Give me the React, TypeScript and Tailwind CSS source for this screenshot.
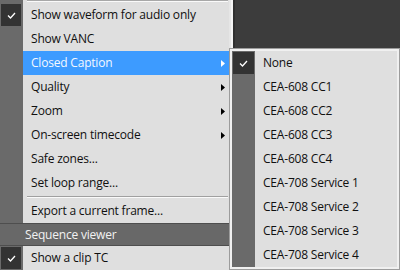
import React from "react";

const font = { fontFamily: '"Open Sans", "Noto Sans", sans-serif' };

function Check() {
  return (
    <svg width="9" height="7" viewBox="0 0 9 7" className="block">
      <polyline points="1,3.5 3.5,6 8,1" fill="none" stroke="#ffffff" strokeWidth="1.3" />
    </svg>
  );
}

function Arrow({ white }: { white?: boolean }) {
  return (
    <svg width="4" height="7" viewBox="0 0 4 7" className="block">
      <polygon points="0,0 4,3.5 0,7" fill={white ? "#ffffff" : "#000000"} />
    </svg>
  );
}

type Item = { label: string; checked?: boolean; sub?: boolean; active?: boolean };

function MainRow({ item }: { item: Item }) {
  return (
    <div className="flex h-[24px]">
      <div className="w-[23px] shrink-0 bg-[#6a6a6a] flex items-center">
        {item.checked && (
          <div className="ml-[1px] w-[20px] h-[22px] bg-[#333333] flex items-center justify-center">
            <Check />
          </div>
        )}
      </div>
      <div
        className={
          "flex-1 flex items-center pl-[8px] pr-[4px] text-[12px] tracking-[-0.2px] " +
          (item.active ? "bg-[#3d9bff] text-[#f4f8ff]" : "text-[#101010]")
        }
      >
        <span className="flex-1 whitespace-nowrap">{item.label}</span>
        {item.sub && <Arrow white={item.active} />}
      </div>
    </div>
  );
}

function Separator({ h }: { h: number }) {
  return (
    <div className="flex" style={{ height: h }}>
      <div className="w-[23px] shrink-0 bg-[#6a6a6a]" />
      <div className="flex-1 pl-[4px] pr-[1px] pt-[1px]">
        <div className="h-[1px] bg-[#a0a0a0]" />
        <div className="h-[1px] bg-[#fafafa]" />
      </div>
    </div>
  );
}

const mainTop: Item[] = [
  { label: "Show waveform for audio only", checked: true },
  { label: "Show VANC" },
  { label: "Closed Caption", sub: true, active: true },
  { label: "Quality", sub: true },
  { label: "Zoom", sub: true },
  { label: "On-screen timecode", sub: true },
  { label: "Safe zones..." },
  { label: "Set loop range..." },
];

const subItems = [
  "None",
  "CEA-608 CC1",
  "CEA-608 CC2",
  "CEA-608 CC3",
  "CEA-608 CC4",
  "CEA-708 Service 1",
  "CEA-708 Service 2",
  "CEA-708 Service 3",
  "CEA-708 Service 4",
];

export default function App() {
  return (
    <div className="relative w-[400px] h-[270px] overflow-hidden bg-[#3c3c3c] flex" style={font}>
      <div className="w-[229px] shrink-0 bg-[#dfdfdf] flex flex-col">
        <div className="flex h-[3px]">
          <div className="w-[23px] shrink-0 bg-[#6a6a6a]" />
          <div className="flex-1 pl-[4px] pr-[1px]">
            <div className="h-[1px] bg-[#a8a8a8]" />
            <div className="h-[1px] bg-[#fafafa]" />
          </div>
        </div>
        {mainTop.map((it) => (
          <MainRow key={it.label} item={it} />
        ))}
        <Separator h={4} />
        <MainRow item={{ label: "Export a current frame..." }} />
        <div className="h-[23px] bg-[#686868] border-y border-[#4e4e4e] flex items-center pl-[25px] text-[12px] tracking-[-0.2px] text-[#f2f2f2] whitespace-nowrap">
          Sequence viewer
        </div>
        <MainRow item={{ label: "Show a clip TC", checked: true }} />
      </div>
      <div className="w-[4px] shrink-0 flex">
        <div className="w-[2px] bg-[#e6e6e6]" />
        <div className="w-[2px] bg-[#f4f4f4]" />
      </div>
      <div className="w-[2px] shrink-0 bg-[#303030]" />
      <div className="flex-1" />

      <div className="absolute left-[229px] top-[48px] w-[171px] h-[222px] border border-[#9c9c9c] bg-[#f0f0f0] p-[2px]">
        <div className="flex flex-col bg-[#dfdfdf]">
          {subItems.map((s, i) => (
            <div key={s} className="flex h-[24px]">
              <div className="w-[23px] shrink-0 bg-[#6a6a6a] flex items-center">
                {i === 0 && (
                  <div className="ml-[1px] w-[21px] h-[22px] bg-[#333333] flex items-center justify-center">
                    <Check />
                  </div>
                )}
              </div>
              <div className="flex-1 flex items-center pl-[8px] text-[12px] tracking-[-0.2px] text-[#101010] whitespace-nowrap">
                {s}
              </div>
            </div>
          ))}
        </div>
      </div>
    </div>
  );
}
